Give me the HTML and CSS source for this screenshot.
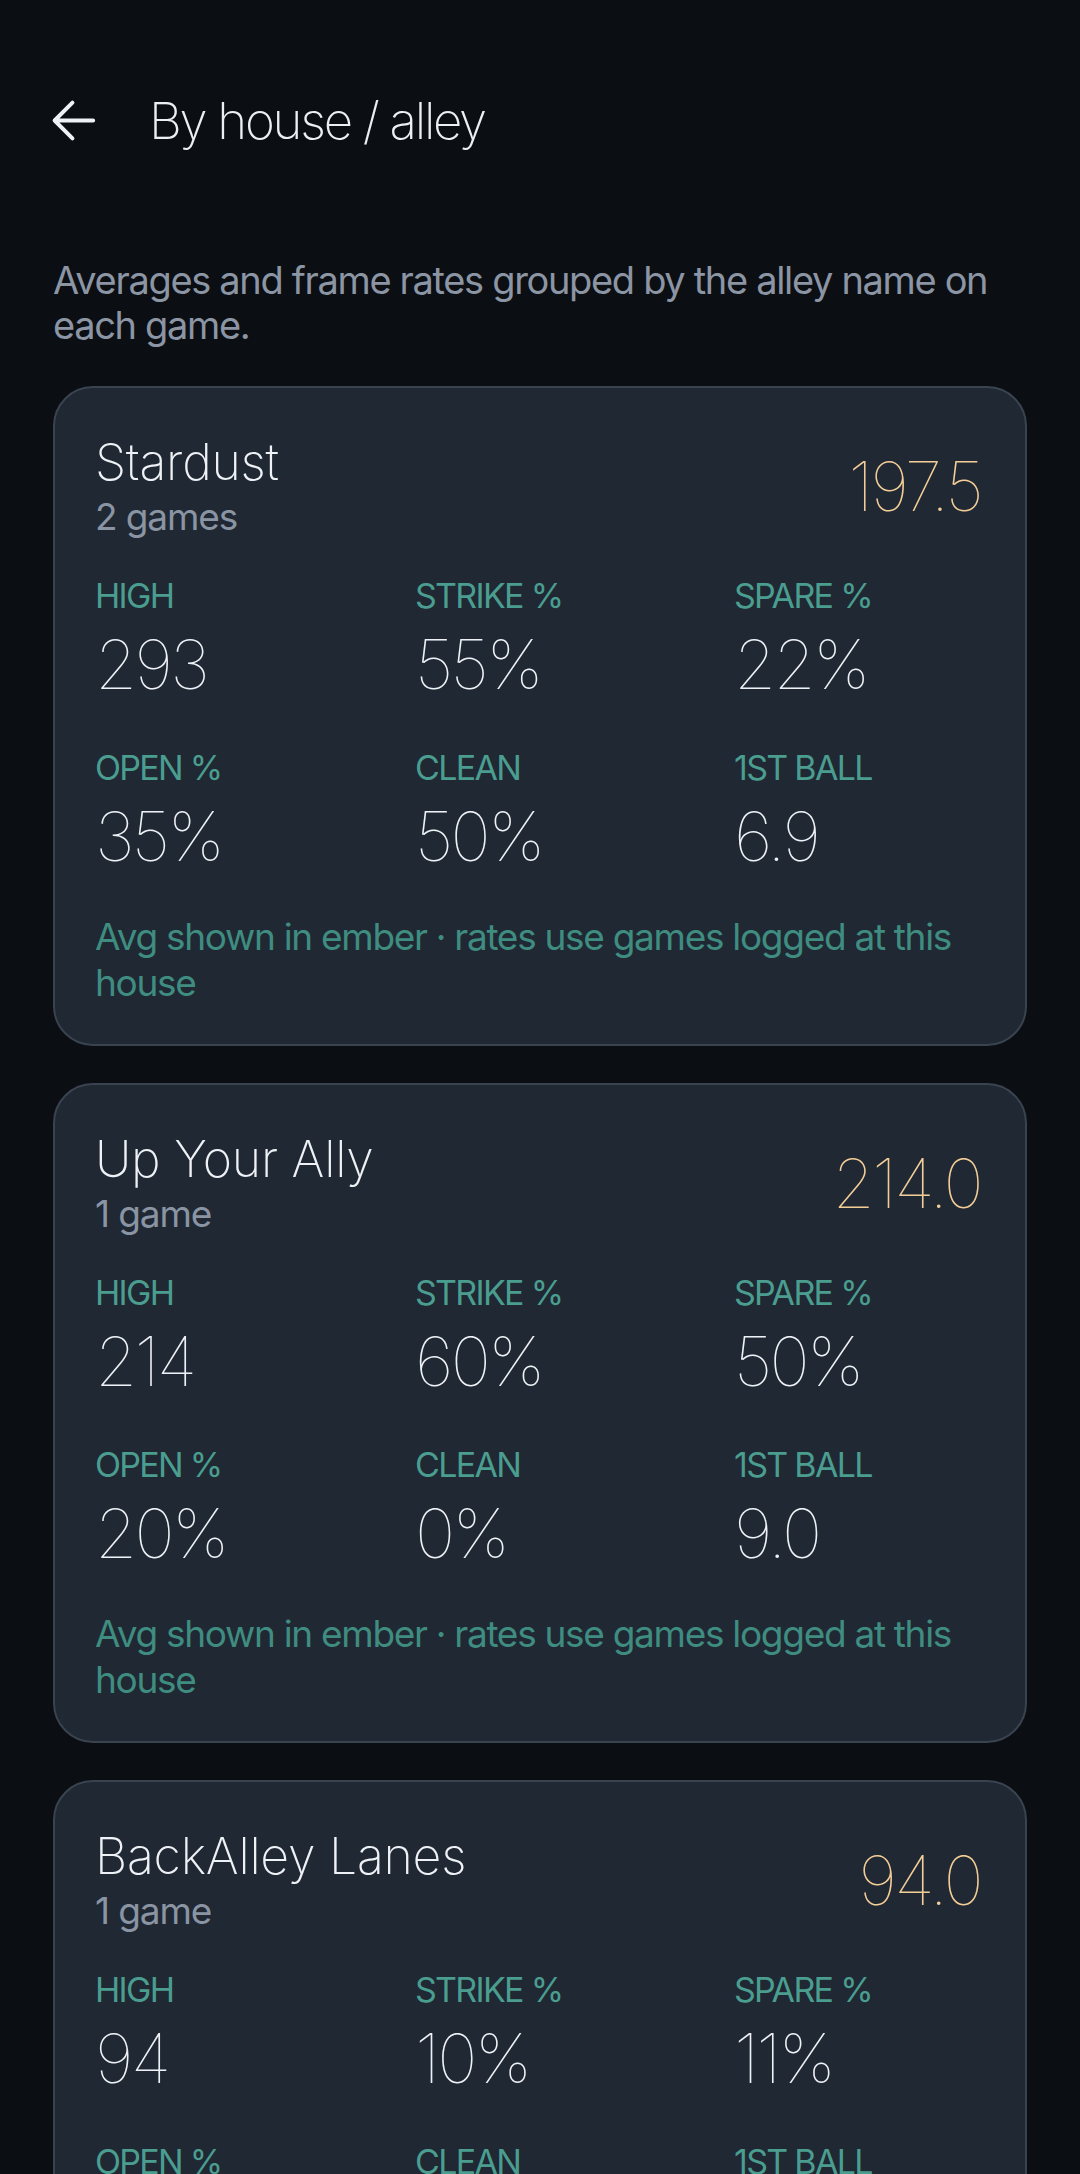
FILE: index.html
```html
<!DOCTYPE html>
<html lang="en">
<head>
    <meta charset="UTF-8">
    <meta name="viewport" content="width=device-width, initial-scale=1.0">
    <title>By house / alley</title>
    <link rel="stylesheet" href="styles.css">
</head>
<body>
    <header class="topbar">
        <button class="back-btn" aria-label="Back">
            <svg viewBox="0 0 24 24" width="63" height="63">
                <path d="M19.5 12H4.8M11.6 5.2L4.8 12l6.8 6.8" fill="none" stroke="#eef1f5" stroke-width="1.5" stroke-linecap="round" stroke-linejoin="round"/>
            </svg>
        </button>
        <h1>By house / alley</h1>
    </header>

    <main class="content">
        <p class="intro">Averages and frame rates grouped by the alley name on each game.</p>

        <section class="card">
            <div class="card-head">
                <div>
                    <h2 class="house-name">Stardust</h2>
                    <div class="house-games">2 games</div>
                </div>
                <div class="house-avg">197.5</div>
            </div>
            <div class="stats">
                <div class="stat"><span class="stat-label">HIGH</span><span class="stat-value">293</span></div>
                <div class="stat"><span class="stat-label">STRIKE %</span><span class="stat-value">55%</span></div>
                <div class="stat"><span class="stat-label">SPARE %</span><span class="stat-value">22%</span></div>
                <div class="stat"><span class="stat-label">OPEN %</span><span class="stat-value">35%</span></div>
                <div class="stat"><span class="stat-label">CLEAN</span><span class="stat-value">50%</span></div>
                <div class="stat"><span class="stat-label">1ST BALL</span><span class="stat-value">6.9</span></div>
            </div>
            <p class="note">Avg shown in ember · rates use games logged at this house</p>
        </section>

        <section class="card">
            <div class="card-head">
                <div>
                    <h2 class="house-name">Up Your Ally</h2>
                    <div class="house-games">1 game</div>
                </div>
                <div class="house-avg">214.0</div>
            </div>
            <div class="stats">
                <div class="stat"><span class="stat-label">HIGH</span><span class="stat-value">214</span></div>
                <div class="stat"><span class="stat-label">STRIKE %</span><span class="stat-value">60%</span></div>
                <div class="stat"><span class="stat-label">SPARE %</span><span class="stat-value">50%</span></div>
                <div class="stat"><span class="stat-label">OPEN %</span><span class="stat-value">20%</span></div>
                <div class="stat"><span class="stat-label">CLEAN</span><span class="stat-value">0%</span></div>
                <div class="stat"><span class="stat-label">1ST BALL</span><span class="stat-value">9.0</span></div>
            </div>
            <p class="note">Avg shown in ember · rates use games logged at this house</p>
        </section>

        <section class="card">
            <div class="card-head">
                <div>
                    <h2 class="house-name">BackAlley Lanes</h2>
                    <div class="house-games">1 game</div>
                </div>
                <div class="house-avg">94.0</div>
            </div>
            <div class="stats">
                <div class="stat"><span class="stat-label">HIGH</span><span class="stat-value">94</span></div>
                <div class="stat"><span class="stat-label">STRIKE %</span><span class="stat-value">10%</span></div>
                <div class="stat"><span class="stat-label">SPARE %</span><span class="stat-value">11%</span></div>
                <div class="stat"><span class="stat-label">OPEN %</span><span class="stat-value">90%</span></div>
                <div class="stat"><span class="stat-label">CLEAN</span><span class="stat-value">0%</span></div>
                <div class="stat"><span class="stat-label">1ST BALL</span><span class="stat-value">5.6</span></div>
            </div>
            <p class="note">Avg shown in ember · rates use games logged at this house</p>
        </section>
    </main>
</body>
</html>
```

FILE: styles.css
```css
body {
    margin: 0;
    background-color: #0b0e13;
    color: #e8ecf1;
    font-family: Inter, Roboto, "Noto Sans", sans-serif;
}
.topbar {
    display: flex;
    align-items: center;
    height: 84px;
    margin-top: 78px;
    padding-left: 42px;
}
.back-btn {
    background: none;
    border: none;
    padding: 0;
    width: 63px;
    height: 63px;
    margin-right: 44px;
    cursor: pointer;
}
.back-btn svg {
    display: block;
}
h1 {
    margin: 0;
    font-size: 51px;
    font-weight: 150;
    letter-spacing: -0.045em;
    color: #eceff3;
}
.content {
    padding: 0 53px;
}
.intro {
    margin: 96px 0 38px;
    font-size: 38px;
    line-height: 45px;
    letter-spacing: -0.035em;
    color: #8b95a4;
}
.card {
    background-color: #1f2833;
    border: 2px solid #3a4350;
    border-radius: 40px;
    padding: 43px 44px 38px 40px;
    margin-bottom: 37px;
}
.card-head {
    display: flex;
    justify-content: space-between;
    align-items: center;
}
.house-name {
    margin: 0;
    font-size: 50px;
    line-height: 62px;
    font-weight: 150;
    letter-spacing: -0.005em;
    color: #eef1f5;
}
.house-games {
    margin-top: 1px;
    font-size: 37px;
    line-height: 46px;
    letter-spacing: -0.03em;
    color: #8a94a3;
}
.house-avg {
    font-size: 68px;
    line-height: 68px;
    font-weight: 130;
    letter-spacing: -0.04em;
    color: #f3cd98;
}
.stats {
    display: grid;
    grid-template-columns: 320px 319px 1fr;
    row-gap: 48px;
    margin-top: 36px;
}
.stat {
    display: flex;
    flex-direction: column;
    gap: 12px;
}
.stat-label {
    font-size: 34px;
    line-height: 40px;
    letter-spacing: -0.05em;
    color: #4a9d8f;
}
.stat-value {
    font-size: 68px;
    line-height: 72px;
    font-weight: 120;
    letter-spacing: -0.04em;
    color: #eef1f5;
}
.note {
    margin: 42px 0 0;
    font-size: 37px;
    line-height: 46px;
    letter-spacing: -0.035em;
    color: #3f8c80;
}
```
